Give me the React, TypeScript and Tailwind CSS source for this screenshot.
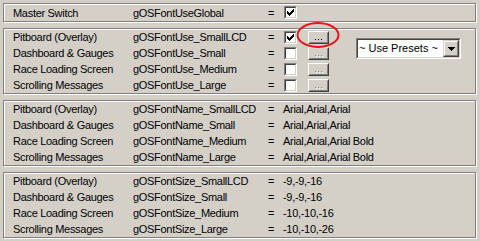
import React from "react";

const FONT = { fontFamily: '"Liberation Sans", Arial, sans-serif' };

function CheckBox({ checked }: { checked?: boolean }) {
  return (
    <div className="w-[13px] h-[13px] border border-t-[#808080] border-l-[#808080] border-b-white border-r-white">
      <div className="w-full h-full border border-t-[#404040] border-l-[#404040] border-b-[#d4d0c8] border-r-[#d4d0c8] bg-white relative">
        {checked && (
          <svg width="7" height="7" viewBox="0 0 7 7" className="absolute left-[1px] top-[1px]" shapeRendering="crispEdges">
            <path
              fill="#000"
              d="M6 0h1v1h-1z M5 1h2v1h-2z M0 2h1v1h-1z M4 2h3v1h-3z M0 3h2v1h-2z M3 3h3v1h-3z M0 4h5v1h-5z M1 5h3v1h-3z M2 6h1v1h-1z"
            />
          </svg>
        )}
      </div>
    </div>
  );
}

function DotsButton({ enabled }: { enabled?: boolean }) {
  return (
    <div className="w-[21px] h-[13px] border border-t-white border-l-white border-b-[#404040] border-r-[#404040]">
      <div className="w-full h-full border border-t-[#d4d0c8] border-l-[#d4d0c8] border-b-[#808080] border-r-[#808080] bg-[#d4d0c8] flex items-end justify-center">
        <svg width="8" height="3" viewBox="0 0 8 3" shapeRendering="crispEdges" className="mb-[1px]">
          {enabled ? (
            <path fill="#000" d="M0 1h1v1h-1z M3 1h1v1h-1z M6 1h1v1h-1z" />
          ) : (
            <>
              <path fill="#fff" d="M1 2h1v1h-1z M4 2h1v1h-1z M7 2h1v1h-1z" />
              <path fill="#808080" d="M0 1h1v1h-1z M3 1h1v1h-1z M6 1h1v1h-1z" />
            </>
          )}
        </svg>
      </div>
    </div>
  );
}

function Panel({ children, className = "" }: { children: React.ReactNode; className?: string }) {
  return (
    <div
      className={`w-[473px] border border-[#808080] shadow-[inset_1px_1px_0_#ffffff,1px_1px_0_#ffffff] ${className}`}
    >
      {children}
    </div>
  );
}

function Row({ label, name, children, h = "h-[16px]" }: { label: string; name: string; children: React.ReactNode; h?: string }) {
  return (
    <div className={`flex items-center ${h} pl-[9px] text-[11px] leading-[16px] tracking-[-0.3px] text-black`}>
      <div className="w-[120px] whitespace-nowrap">{label}</div>
      <div className="w-[135px] whitespace-nowrap">{name}</div>
      <div className="w-[16px]">=</div>
      {children}
    </div>
  );
}

const labels = ["Pitboard (Overlay)", "Dashboard & Gauges", "Race Loading Screen", "Scrolling Messages"];
const suffix = ["SmallLCD", "Small", "Medium", "Large"];

export default function App() {
  return (
    <div className="w-[480px] h-[241px] bg-[#d4d0c8] pt-[3px] pl-[3px] flex flex-col gap-[6px] overflow-hidden" style={FONT}>
      <Panel className="h-[19px] pt-[0px]">
        <Row label="Master Switch" name="gOSFontUseGlobal" h="h-[17px]">
          <CheckBox checked />
        </Row>
      </Panel>

      <Panel className="h-[66px] relative">
        <div className="flex">
          <div className="flex flex-col">
            {labels.map((l, i) => (
              <Row key={l} label={l} name={`gOSFontUse_${suffix[i]}`}>
                <div className="flex items-center gap-[11px]">
                  <CheckBox checked={i === 0} />
                  <DotsButton enabled={i === 0} />
                </div>
              </Row>
            ))}
          </div>
          <div className="ml-[27px] mt-[9px] w-[105px] h-[21px] border border-t-[#808080] border-l-[#808080] border-b-white border-r-white">
            <div className="w-full h-full border border-t-[#404040] border-l-[#404040] border-b-[#d4d0c8] border-r-[#d4d0c8] bg-white flex items-center">
              <div className="flex-1 pl-[1px] text-[11px] leading-[15px] text-black whitespace-nowrap">~ Use Presets ~</div>
              <div className="w-[16px] h-[17px] border border-t-[#d4d0c8] border-l-[#d4d0c8] border-b-[#404040] border-r-[#404040]">
                <div className="w-full h-full border border-t-white border-l-white border-b-[#808080] border-r-[#808080] bg-[#d4d0c8] flex items-center justify-center">
                  <svg width="7" height="4" viewBox="0 0 7 4" shapeRendering="crispEdges">
                    <path fill="#000" d="M0 0h7v1h-7z M1 1h5v1h-5z M2 2h3v1h-3z M3 3h1v1h-1z" />
                  </svg>
                </div>
              </div>
            </div>
          </div>
        </div>
        <svg
          className="absolute pointer-events-none"
          style={{ left: 292, top: -8 }}
          width="48"
          height="30"
          viewBox="0 0 48 30"
        >
          <ellipse cx="22" cy="14" rx="20.5" ry="12" fill="none" stroke="#e8141c" strokeWidth="2" />
        </svg>
      </Panel>

      <Panel className="h-[66px]">
        {labels.map((l, i) => (
          <Row key={l} label={l} name={`gOSFontName_${suffix[i]}`}>
            <div className="-ml-[1px] whitespace-nowrap">{i < 2 ? "Arial,Arial,Arial" : "Arial,Arial,Arial Bold"}</div>
          </Row>
        ))}
      </Panel>

      <Panel className="h-[66px]">
        {labels.map((l, i) => (
          <Row key={l} label={l} name={`gOSFontSize_${suffix[i]}`}>
            <div className="-ml-[1px] whitespace-nowrap">{["-9,-9,-16", "-9,-9,-16", "-10,-10,-16", "-10,-10,-26"][i]}</div>
          </Row>
        ))}
      </Panel>
    </div>
  );
}
